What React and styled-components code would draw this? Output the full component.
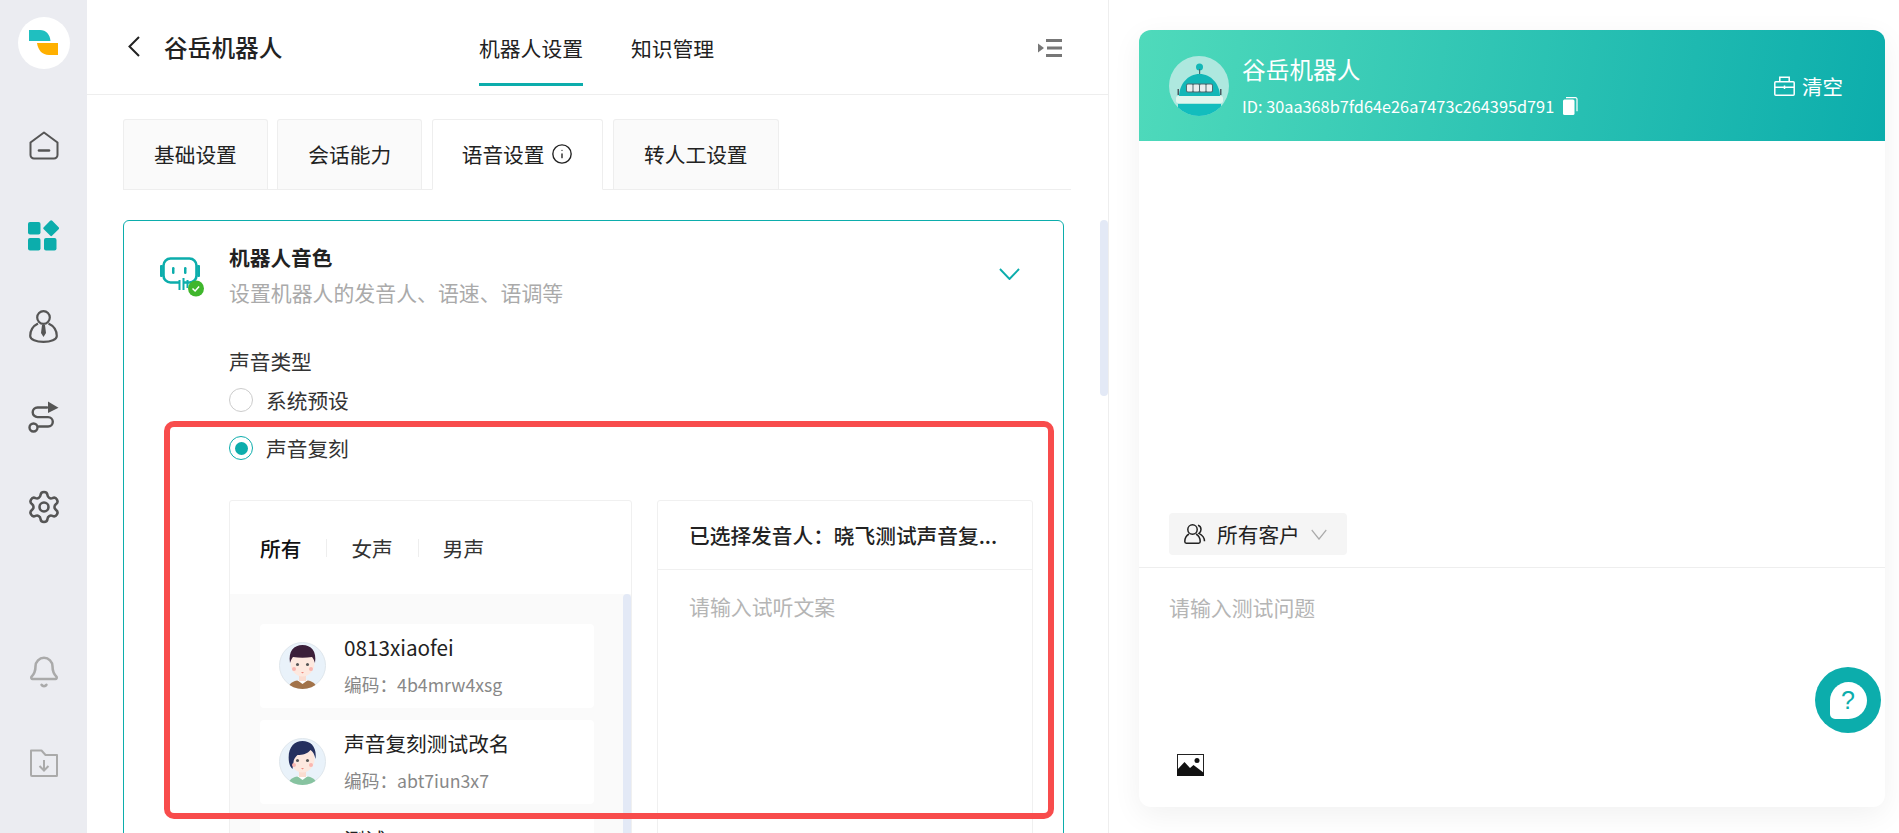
import React from "react";
import styled, { createGlobalStyle } from "styled-components";
import { Bell, Info, Settings } from "lucide-react";

const TEAL = "#0cadac";
const FONT = `"Noto Sans CJK SC", "Noto Sans", sans-serif`;

const Global = createGlobalStyle`
  html, body { margin: 0; padding: 0; height: 100%; overflow: hidden; background: #fff; }
  body { font-family: ${FONT}; color: #222; }
  * { box-sizing: border-box; }
`;

const S = {
  Page: styled.div`
    display: flex;
    width: 100vw;
    height: 100vh;
    overflow: hidden;
  `,
  Sidebar: styled.aside`
    width: 87px;
    flex: none;
    background: #ebecf1;
    display: flex;
    flex-direction: column;
    align-items: center;
    padding: 17px 0 25px;
  `,
  LogoWrap: styled.div`
    width: 52px;
    height: 52px;
    border-radius: 50%;
    background: #fff;
    display: flex;
    align-items: center;
    justify-content: center;
    margin-bottom: 31px;
  `,
  NavIcon: styled.div`
    width: 87px;
    height: 90.5px;
    display: flex;
    align-items: center;
    justify-content: center;
    color: ${({ $color }) => $color || "#555"};
  `,
  SideBottom: styled.div`
    margin-top: auto;
  `,
  Main: styled.main`
    width: 1022px;
    flex: none;
    position: relative;
    border-right: 1px solid #eee;
    overflow: hidden;
  `,
  Header: styled.header`
    height: 95px;
    border-bottom: 1px solid #eee;
    display: flex;
    padding: 0 46px 0 41px;
  `,
  Back: styled.div`
    display: flex;
    align-items: center;
    gap: 24px;
    height: 94px;
    padding-bottom: 1px;
    width: 351px;
    font-size: 23.7px;
    font-weight: 500;
    line-height: 32px;
    margin-bottom: 0;
  `,
  HeaderNav: styled.nav`
    display: flex;
    gap: 48px;
  `,
  NavItem: styled.div`
    align-self: flex-start;
    margin-top: 30px;
    height: 56px;
    font-size: 20.8px;
    line-height: 36px;
    color: #222;
    border-bottom: 3px solid ${({ $active }) => ($active ? TEAL : "transparent")};
  `,
  Collapse: styled.div`
    margin-left: auto;
    margin-top: 38px;
    height: 18px;
  `,
  Scrollbar: styled.div`
    position: absolute;
    left: 1013px;
    top: 220px;
    width: 8px;
    height: 176px;
    border-radius: 4px;
    background: #e3e9f6;
  `,
  Content: styled.div`
    padding: 24px 0 0 36px;
  `,
  TabRow: styled.div`
    display: flex;
    gap: 9.6px;
    width: 948px;
    height: 71px;
    border-bottom: 1px solid #eee;
  `,
  Tab: styled.div`
    display: flex;
    align-items: center;
    gap: 7px;
    height: ${({ $active }) => ($active ? "71px" : "70px")};
    padding: 0 ${({ $active }) => ($active ? "29px" : "30px")} 2px;
    font-size: 20.7px;
    line-height: 28px;
    color: #222;
    border: 1px solid #eee;
    border-bottom: ${({ $active }) => ($active ? "1px solid #fff" : "none")};
    border-radius: 3px 3px 0 0;
    background: ${({ $active }) => ($active ? "#fff" : "#fafafa")};
  `,
  Card: styled.section`
    position: relative;
    width: 941px;
    margin-top: 30px;
    height: 760px;
    border: 1px solid ${TEAL};
    border-radius: 6px;
    padding: 21px 30px 0 105px;
  `,
  CardIcon: styled.div`
    position: absolute;
    left: 36px;
    top: 36px;
    line-height: 0;
  `,
  CardChevron: styled.div`
    position: absolute;
    right: 43px;
    top: 47px;
    line-height: 0;
  `,
  CardTitle: styled.div`
    font-size: 20.7px;
    font-weight: 700;
    line-height: 30px;
    color: #222;
  `,
  CardSub: styled.div`
    font-size: 20.9px;
    line-height: 28px;
    margin-top: 6px;
    color: #aaa;
  `,
  FieldLabel: styled.div`
    font-size: 20.7px;
    line-height: 28px;
    margin-top: 41px;
    color: #333;
  `,
  RadioRow: styled.div`
    display: flex;
    align-items: center;
    gap: 13px;
    height: 28px;
    margin-top: ${({ $gap }) => $gap}px;
    font-size: 20.7px;
    color: #333;
  `,
  Radio: styled.span`
    width: 24px;
    height: 24px;
    border-radius: 50%;
    background: #fff;
    border: 1px solid ${({ $on }) => ($on ? TEAL : "#ccc")};
    display: flex;
    align-items: center;
    justify-content: center;
    &::after {
      content: "";
      display: ${({ $on }) => ($on ? "block" : "none")};
      width: 13px;
      height: 13px;
      border-radius: 50%;
      background: ${TEAL};
    }
  `,
  Panels: styled.div`
    display: grid;
    grid-template-columns: 403px 376px;
    gap: 25px;
    margin-top: 38px;
    height: 420px;
  `,
  Panel: styled.div`
    border: 1px solid #f0f0f0;
    border-radius: 3px;
    overflow: hidden;
  `,
  VoiceTabs: styled.div`
    height: 93px;
    display: flex;
    align-items: center;
    padding-left: 30px;
    font-size: 20.7px;
    line-height: 28px;
    color: #333;
  `,
  VoiceTab: styled.span`
    color: ${({ $active }) => ($active ? "#111" : "#333")};
    font-weight: ${({ $active }) => ($active ? 500 : 400)};
  `,
  VoiceSep: styled.i`
    width: 1px;
    height: 18px;
    background: #eee;
    margin: 0 24px 0 25px;
  `,
  ListWrap: styled.div`
    position: relative;
    height: 330px;
    background: #fafafa;
    padding: 30px 37px 0 30px;
    display: flex;
    flex-direction: column;
    gap: 12px;
  `,
  ListScroll: styled.div`
    position: absolute;
    right: 0;
    top: 0;
    bottom: 0;
    width: 8px;
    border-radius: 4px 4px 0 0;
    background: #e3e9f6;
  `,
  VoiceItem: styled.div`
    height: 84px;
    flex: none;
    background: #fff;
    border-radius: 4px;
    display: flex;
    gap: 18px;
    padding: 18px 19px 0;
  `,
  VoiceName: styled.div`
    font-size: 20.7px;
    line-height: 30px;
    color: #222;
    margin-top: -10px;
  `,
  VoiceCode: styled.div`
    font-size: 17.7px;
    line-height: 26px;
    color: #888;
    margin-top: 9px;
  `,
  PreviewHead: styled.div`
    height: 69px;
    border-bottom: 1px solid #f0f0f0;
    padding: 0 31px;
    display: flex;
    align-items: center;
    font-size: 20.7px;
    font-weight: 500;
    color: #222;
    white-space: nowrap;
    overflow: hidden;
  `,
  Placeholder: styled.div`
    font-size: 20.9px;
    line-height: 28px;
    color: #b5b5b5;
    padding: ${({ $pad }) => $pad};
  `,
  RedFrame: styled.div`
    position: absolute;
    left: 40px;
    top: 200px;
    width: 890px;
    height: 398px;
    border: 6px solid #f84c4c;
    border-radius: 10px;
    pointer-events: none;
  `,
  Right: styled.div`
    flex: 1;
    position: relative;
    padding: 30px 14px 26px 30px;
    background: #fff;
  `,
  Chat: styled.div`
    height: 100%;
    display: flex;
    flex-direction: column;
    border-radius: 12px;
    background: #fff;
    box-shadow: 0 8px 30px rgba(0, 0, 0, 0.06);
  `,
  ChatHead: styled.div`
    height: 111px;
    flex: none;
    border-radius: 12px 12px 0 0;
    background: linear-gradient(100deg, #4fdabb 0%, #0cadac 100%);
    display: flex;
    align-items: center;
    padding: 0 42px 0 30px;
    color: #fff;
  `,
  ChatAvatar: styled.div`
    width: 60px;
    height: 60px;
    margin-top: 1px;
    flex: none;
    line-height: 0;
  `,
  ChatInfo: styled.div`
    margin-left: 13px;
  `,
  ChatTitle: styled.div`
    font-size: 23.7px;
    line-height: 32px;
    margin-top: -1px;
  `,
  ChatId: styled.div`
    display: flex;
    align-items: center;
    gap: 9px;
    font-size: 16.3px;
    line-height: 24px;
    margin-top: 9px;
  `,
  Clear: styled.div`
    margin-left: auto;
    display: flex;
    align-items: center;
    gap: 7px;
    font-size: 20.5px;
    line-height: 28px;
    margin-top: -siz;
  `,
  ChatBody: styled.div`
    flex: 1;
    display: flex;
    align-items: flex-end;
    padding: 0 30px 12px;
  `,
  Audience: styled.div`
    width: 178px;
    height: 42px;
    border-radius: 4px;
    background: #f5f5f5;
    display: flex;
    align-items: center;
    padding-left: 15px;
    font-size: 20.7px;
    color: #222;
    gap: 11px;
  `,
  ChatInput: styled.div`
    height: 240px;
    flex: none;
    border-top: 1px solid #eee;
    padding: 25px 30px 31px;
    display: flex;
    flex-direction: column;
    justify-content: space-between;
  `,
  ImageBtn: styled.div`
    padding-left: 8px;
    line-height: 0;
  `,
  Help: styled.div`
    position: absolute;
    right: 18px;
    bottom: 100px;
    width: 66px;
    height: 66px;
    border-radius: 50%;
    background: ${TEAL};
    display: flex;
    align-items: center;
    justify-content: center;
  `,
  HelpBubble: styled.span`
    width: 37px;
    height: 37px;
    border-radius: 50% 50% 50% 5px;
    background: #fff;
    color: ${TEAL};
    font-family: "Liberation Sans", sans-serif;
    font-size: 25px;
    font-weight: 400;
    line-height: 37px;
    text-align: center;
  `,
};

function Logo() {
  return (
    <svg width="30" height="26" viewBox="0 0 30 26">
      <path d="M0 0h11c6 0 10 4.500 10.500 11H0z" fill="#1fbfc0" />
      <path d="M8 13h21v12h-9C13 25 9 20 8 13z" fill="#ffb000" />
    </svg>
  );
}

function HomeIcon() {
  return (
    <svg width="30" height="29" viewBox="0 0 30 29" fill="none" stroke="#555" strokeWidth="2">
      <path d="M1.500 11.500 15 1.500l13.500 10V24a3.500 3.500 0 0 1-3.500 3.500H5A3.500 3.500 0 0 1 1.500 24z" strokeLinejoin="round" />
      <path d="M10 19.500h10" strokeWidth="2.600" strokeLinecap="round" />
    </svg>
  );
}

function AppsIcon() {
  return (
    <svg width="31" height="31" viewBox="0 0 31 31" fill={TEAL}>
      <rect x="0" y="2" width="12.500" height="12.500" rx="2" />
      <rect x="0" y="18" width="12.500" height="12.500" rx="2" />
      <rect x="16" y="18" width="12.500" height="12.500" rx="2" />
      <rect x="17.200" y="2.200" width="12" height="12" rx="1.500" transform="rotate(45 23.200 8.200)" />
    </svg>
  );
}

function PersonIcon() {
  return (
    <svg width="29" height="33" viewBox="0 0 29 33" fill="none" stroke="#555" strokeWidth="2.200">
      <circle cx="14.500" cy="7.500" r="6.300" />
      <path d="M9 13.500C4 16 1.200 20.500 1.200 26c0 3.500 6 5.800 13.300 5.800S27.800 29.500 27.800 26c0-5.500-3-10-8.300-12.500" />
      <path d="M13 15h3l1 8-2.500 4-2.500-4z" fill="#555" stroke="none" />
    </svg>
  );
}

function RouteIcon() {
  return (
    <svg width="31" height="32" viewBox="0 0 31 32" fill="none" stroke="#555" strokeWidth="2.400">
      <path d="M19 6.500H9.500a4.800 4.800 0 0 0 0 9.600h10.600a4.700 4.700 0 0 1 0 9.400H11" strokeLinecap="round" />
      <circle cx="5.500" cy="26.500" r="4" />
      <path d="M20 0.500 30.500 6.800 20 12z" fill="#555" stroke="none" />
    </svg>
  );
}

function FolderIcon() {
  return (
    <svg width="28" height="28" viewBox="0 0 28 28" fill="none" stroke="#aaa" strokeWidth="2">
      <path d="M1 26V1.500h10.500l4 4.500H27v20.500a.5.5 0 0 1-.5.5H2a1 1 0 0 1-1-1z" strokeLinejoin="round" />
      <path d="M14 11v10M9.500 17l4.500 4.500 4.500-4.500" />
    </svg>
  );
}

function CollapseIcon() {
  return (
    <svg width="24" height="18" viewBox="0 0 24 18" fill="#777">
      <path d="M0 4.500 6 9l-6 4.500z" />
      <rect x="8" y="0" width="16" height="3" />
      <rect x="9" y="7.500" width="15" height="3" />
      <rect x="8" y="15" width="16" height="3" />
    </svg>
  );
}

function BotIcon() {
  return (
    <svg width="46" height="42" viewBox="0 0 46 42" fill="none">
      <rect x="3.500" y="1.500" width="33" height="24" rx="7" stroke={TEAL} strokeWidth="2.600" />
      <rect x="0" y="8" width="2.800" height="12" rx="1" fill={TEAL} />
      <rect x="37.200" y="8" width="2.800" height="12" rx="1" fill={TEAL} />
      <rect x="12" y="10" width="2.500" height="7" rx="1.200" fill={TEAL} />
      <rect x="24" y="10" width="2.500" height="7" rx="1.200" fill={TEAL} />
      <path d="M20 24h4v5h-4z" fill="#fff" />
      <path d="M19.500 23v10M23.500 21v12M27.500 23v8" stroke={TEAL} strokeWidth="2" />
      <circle cx="36" cy="31.500" r="8" fill="#3fb62c" />
      <path d="M32.500 31.500l2.600 2.500 4-4.500" stroke="#fff" strokeWidth="1.500" />
    </svg>
  );
}

function BoyAvatar({ hair, shirt, long }) {
  return (
    <svg width="47" height="47" viewBox="0 0 47 47">
      <defs>
        <clipPath id={`clip-${hair}`}>
          <circle cx="23.500" cy="23.500" r="23.500" />
        </clipPath>
      </defs>
      <circle cx="23.500" cy="23.500" r="23" fill="#e9f2fa" stroke="#dfe6ec" />
      <g clipPath={`url(#clip-${hair})`}>
        <path d="M9 47c1-7 7-9 14.500-9S37 40 38 47z" fill={shirt} />
        <path d="M18 38h11l-5.500 4z" fill="#fff" />
        <rect x="20" y="31" width="7" height="8" fill="#fbdcd0" />
        <ellipse cx="23.500" cy="21" rx="12" ry="13.500" fill="#fde8df" />
        <path
          d={
            long
              ? "M10 24C8 10 15 3 23.500 3S38 9 36.500 21c-1-5-3-8-5-9-3 4-8 5-13 5-2 2-4 4-4 7l-1 7c-2-2-3-4-3.500-7z"
              : "M11 21C9 9 15 3 23.500 3S38 9 36 21c-1-3-2-5-3-6-6 1-13 1-19 0-1 1-2 3-3 6z"
          }
          fill={hair}
        />
        <circle cx="18.500" cy="22.500" r="1.500" fill="#555" />
        <circle cx="28.500" cy="22.500" r="1.500" fill="#555" />
        <circle cx="15" cy="27" r="2" fill="#f9b6b0" />
        <circle cx="32" cy="27" r="2" fill="#f9b6b0" />
        <path d="M22 30h3l-1.500 1.500z" fill="#f08a80" />
      </g>
    </svg>
  );
}

function RobotAvatar() {
  return (
    <svg width="60" height="60" viewBox="0 0 60 60">
      <defs>
        <clipPath id="robot-clip">
          <circle cx="30" cy="30" r="30" />
        </clipPath>
      </defs>
      <circle cx="30" cy="30" r="30" fill="#aee8df" />
      <g clipPath="url(#robot-clip)">
        <circle cx="30.500" cy="11" r="3.500" fill="#12b7b7" />
        <rect x="30" y="13" width="1.200" height="6" fill="#4a6a70" />
        <path d="M10 41c0-13 9-23 20.500-23S51 28 51 41z" fill="#12b7b7" />
        <rect x="8.500" y="33" width="1.500" height="6" fill="#4a5a60" />
        <rect x="51" y="33" width="1.500" height="6" fill="#4a5a60" />
        <rect x="17" y="27.500" width="27" height="9" rx="2" fill="#4f6a70" />
        <rect x="18" y="28.500" width="5.500" height="7" rx="1" fill="#e8eeee" />
        <rect x="24.500" y="28.500" width="5.500" height="7" rx="1" fill="#e8eeee" />
        <rect x="31" y="28.500" width="5.500" height="7" rx="1" fill="#e8eeee" />
        <rect x="37.500" y="28.500" width="5.500" height="7" rx="1" fill="#e8eeee" />
        <rect x="7" y="40" width="47" height="7" rx="2" fill="#dff6ee" />
        <path d="M9 48h43v12H9z" fill="#12bdbd" />
      </g>
    </svg>
  );
}

function ChevronDown({ color, width, height, stroke }) {
  return (
    <svg width={width} height={height} viewBox="0 0 22 12" fill="none" preserveAspectRatio="none">
      <path d="M1 1l10 10L21 1" stroke={color} strokeWidth={stroke} />
    </svg>
  );
}

function BackIcon() {
  return (
    <svg width="12" height="21" viewBox="0 0 12 21" fill="none">
      <path d="M11 1 1.500 10.500 11 20" stroke="#222" strokeWidth="2" />
    </svg>
  );
}

function CopyIcon() {
  return (
    <svg width="15" height="18" viewBox="0 0 15 18" fill="none">
      <rect x="0" y="2.500" width="11.500" height="15.500" rx="1.500" fill="#fff" />
      <path d="M3 .7h9.500a1.500 1.500 0 0 1 1.500 1.500v12" stroke="#fff" strokeWidth="1.200" />
    </svg>
  );
}

function ClearIcon() {
  return (
    <svg width="21" height="20" viewBox="0 0 21 20" fill="none" stroke="#fff" strokeWidth="1.500">
      <rect x="0.800" y="5.800" width="19.400" height="13.400" rx="1" />
      <path d="M5.800 5.800V1.200h9.400v4.600M.8 11.200h19.400M10.500 9.500v3.500" />
    </svg>
  );
}

function UsersIcon() {
  return (
    <svg width="22" height="20" viewBox="0 0 22 20" fill="none" stroke="#222" strokeWidth="1.500">
      <circle cx="8.500" cy="5.500" r="4.700" />
      <path d="M5 10C2.500 11.500.8 14 .8 17.500c0 1 .5 1.700 1.500 1.700h12.400c1 0 1.500-.7 1.500-1.700 0-3.500-1.700-6-4.200-7.500" />
      <path d="M14 1.200c2 .5 3 2.300 3 4.300 0 1.600-.8 3-2 3.800 3 1.500 5.500 4 5.500 8" />
    </svg>
  );
}

function ImageIcon() {
  return (
    <svg width="27" height="22" viewBox="0 0 27 22">
      <rect x="0.500" y="0.500" width="26" height="21" fill="#fff" stroke="#222" />
      <circle cx="20" cy="6.500" r="2.500" fill="#111" />
      <path d="M0 16 7.500 8l5.500 6 3.500-3 10.500 8v3H0z" fill="#111" />
    </svg>
  );
}

const voices = [
  { name: "0813xiaofei", code: "4b4mrw4xsg", hair: "#3b1f3a", shirt: "#a2734a", long: false },
  { name: "声音复刻测试改名", code: "abt7iun3x7", hair: "#25305f", shirt: "#87c3a0", long: true },
  { name: "测试", code: "abt7iun3x8", hair: "#3b1f3a", shirt: "#a2734a", long: false },
];

const tabs = ["基础设置", "会话能力", "语音设置", "转人工设置"];

function App() {
  return (
    <S.Page>
      <Global />
      <S.Sidebar>
        <S.LogoWrap>
          <Logo />
        </S.LogoWrap>
        <S.NavIcon><HomeIcon /></S.NavIcon>
        <S.NavIcon><AppsIcon /></S.NavIcon>
        <S.NavIcon><PersonIcon /></S.NavIcon>
        <S.NavIcon><RouteIcon /></S.NavIcon>
        <S.NavIcon><Settings size={36} strokeWidth={1.7} /></S.NavIcon>
        <S.SideBottom>
          <S.NavIcon $color="#aaa"><Bell size={34} strokeWidth={1.8} /></S.NavIcon>
          <S.NavIcon $color="#aaa"><FolderIcon /></S.NavIcon>
        </S.SideBottom>
      </S.Sidebar>

      <S.Main>
        <S.Header>
          <S.Back>
            <BackIcon />
            谷岳机器人
          </S.Back>
          <S.HeaderNav>
            <S.NavItem $active>机器人设置</S.NavItem>
            <S.NavItem>知识管理</S.NavItem>
          </S.HeaderNav>
          <S.Collapse>
            <CollapseIcon />
          </S.Collapse>
        </S.Header>

        <S.Content>
          <S.TabRow>
            {tabs.map((tab, index) => (
              <S.Tab key={tab} $active={index === 2}>
                {tab}
                {index === 2 && <Info size={22} strokeWidth={1.5} />}
              </S.Tab>
            ))}
          </S.TabRow>

          <S.Card>
            <S.CardIcon>
              <BotIcon />
            </S.CardIcon>
            <S.CardChevron>
              <ChevronDown color={TEAL} width={21} height={12} stroke={2} />
            </S.CardChevron>
            <S.CardTitle>机器人音色</S.CardTitle>
            <S.CardSub>设置机器人的发音人、语速、语调等</S.CardSub>
            <S.FieldLabel>声音类型</S.FieldLabel>
            <S.RadioRow $gap={11}>
              <S.Radio />
              系统预设
            </S.RadioRow>
            <S.RadioRow $gap={20}>
              <S.Radio $on />
              声音复刻
            </S.RadioRow>
            <S.Panels>
              <S.Panel>
                <S.VoiceTabs>
                  <S.VoiceTab $active>所有</S.VoiceTab>
                  <S.VoiceSep />
                  <S.VoiceTab>女声</S.VoiceTab>
                  <S.VoiceSep />
                  <S.VoiceTab>男声</S.VoiceTab>
                </S.VoiceTabs>
                <S.ListWrap>
                  <S.ListScroll />
                  {voices.map((voice) => (
                    <S.VoiceItem key={voice.code}>
                      <BoyAvatar hair={voice.hair} shirt={voice.shirt} long={voice.long} />
                      <div>
                        <S.VoiceName>{voice.name}</S.VoiceName>
                        <S.VoiceCode>编码：{voice.code}</S.VoiceCode>
                      </div>
                    </S.VoiceItem>
                  ))}
                </S.ListWrap>
              </S.Panel>
              <S.Panel>
                <S.PreviewHead>已选择发音人：晓飞测试声音复...</S.PreviewHead>
                <S.Placeholder $pad="22px 31px">请输入试听文案</S.Placeholder>
              </S.Panel>
            </S.Panels>
            <S.RedFrame />
          </S.Card>
        </S.Content>
        <S.Scrollbar />
      </S.Main>

      <S.Right>
        <S.Chat>
          <S.ChatHead>
            <S.ChatAvatar>
              <RobotAvatar />
            </S.ChatAvatar>
            <S.ChatInfo>
              <S.ChatTitle>谷岳机器人</S.ChatTitle>
              <S.ChatId>
                ID: 30aa368b7fd64e26a7473c264395d791
                <CopyIcon />
              </S.ChatId>
            </S.ChatInfo>
            <S.Clear>
              <ClearIcon />
              清空
            </S.Clear>
          </S.ChatHead>
          <S.ChatBody>
            <S.Audience>
              <UsersIcon />
              所有客户
              <ChevronDown color="#aaa" width={16} height={11} stroke={1.6} />
            </S.Audience>
          </S.ChatBody>
          <S.ChatInput>
            <S.Placeholder $pad="0">请输入测试问题</S.Placeholder>
            <S.ImageBtn>
              <ImageIcon />
            </S.ImageBtn>
          </S.ChatInput>
        </S.Chat>
        <S.Help>
          <S.HelpBubble>?</S.HelpBubble>
        </S.Help>
      </S.Right>
    </S.Page>
  );
}

export default App;
